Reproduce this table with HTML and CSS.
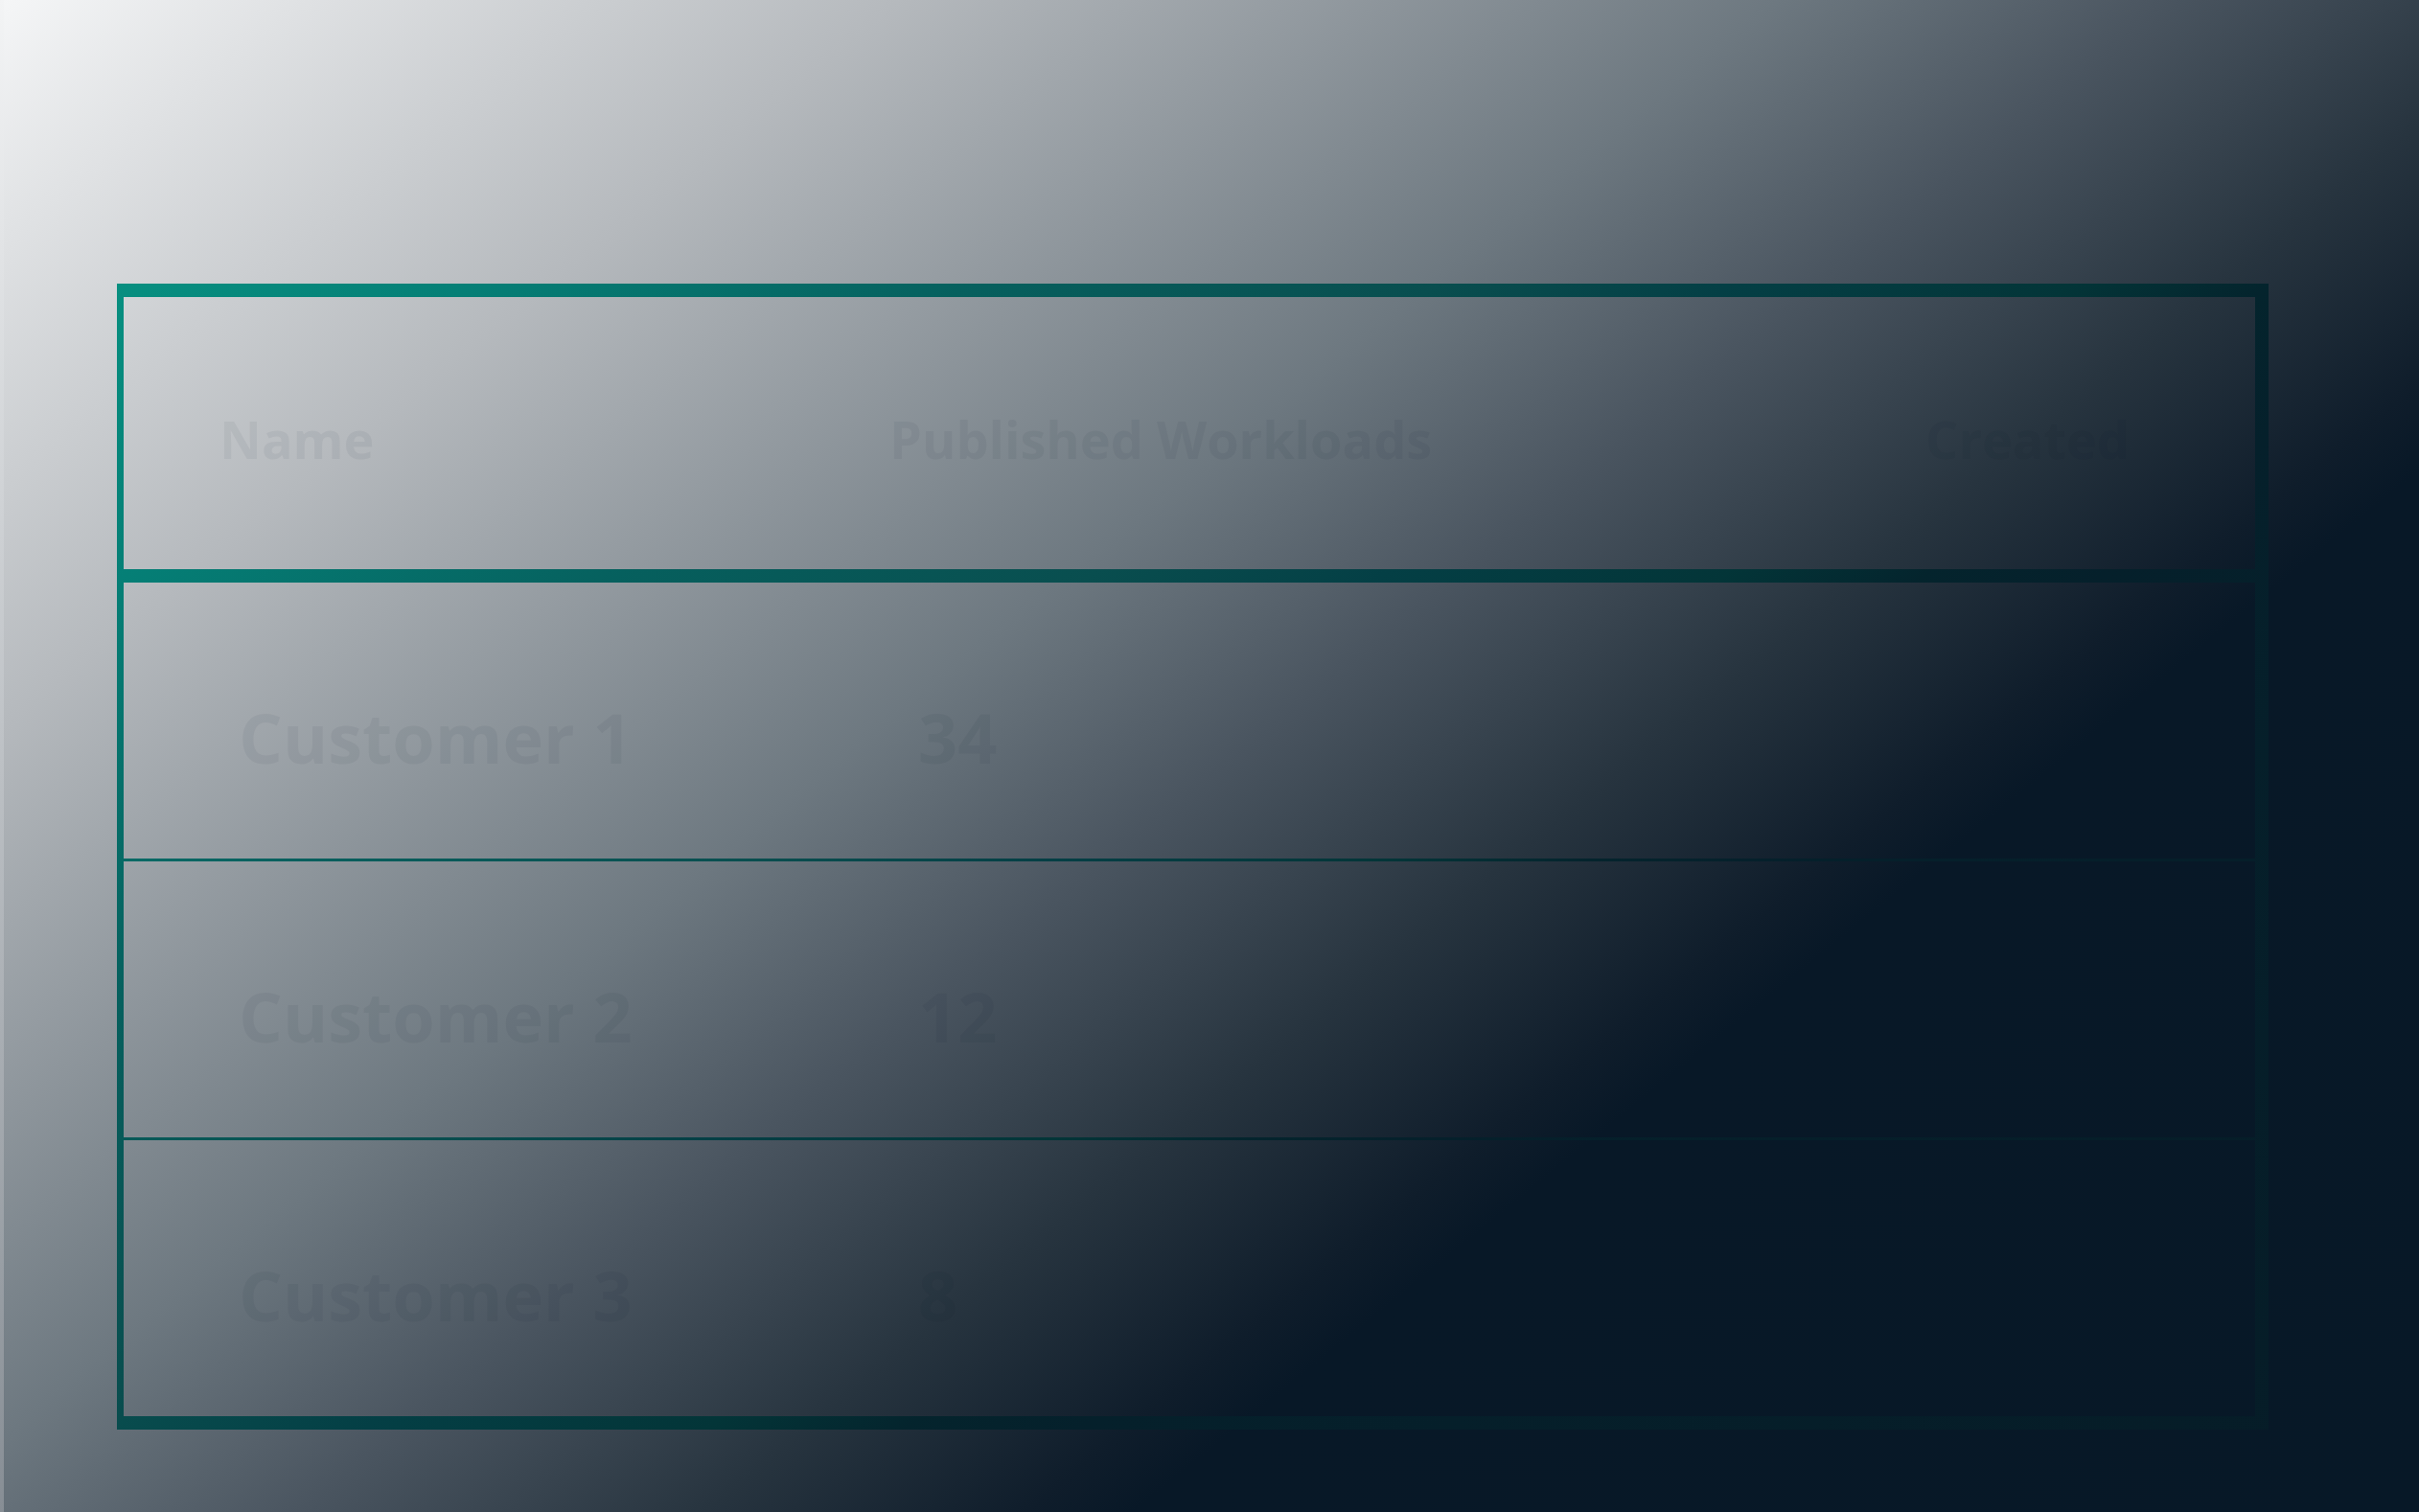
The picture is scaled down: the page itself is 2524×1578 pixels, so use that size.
FILE: index.html
```html
<!DOCTYPE html>
<html lang="en">
<head>
    <meta charset="UTF-8">
    <meta name="viewport" content="width=device-width, initial-scale=1.0">
    <title>Customers</title>
    <link rel="stylesheet" href="styles.css">
</head>
<body>
    <div class="page">
        <table class="customers">
            <colgroup>
                <col class="col-name">
                <col class="col-workloads">
                <col class="col-created">
            </colgroup>
            <thead>
                <tr>
                    <th>Name</th>
                    <th>Published Workloads</th>
                    <th>Created</th>
                </tr>
            </thead>
            <tbody>
                <tr>
                    <td class="name">Customer 1</td>
                    <td class="count">34</td>
                    <td class="date"></td>
                </tr>
                <tr>
                    <td class="name">Customer 2</td>
                    <td class="count">12</td>
                    <td class="date"></td>
                </tr>
                <tr>
                    <td class="name">Customer 3</td>
                    <td class="count">8</td>
                    <td class="date"></td>
                </tr>
            </tbody>
        </table>
    </div>
</body>
</html>
```

FILE: styles.css
```css
* {
    margin: 0;
    padding: 0;
    box-sizing: border-box;
}

html {
    background: linear-gradient(180deg, #f3f4f5, #878e95);
    min-height: 100%;
}

body {
    margin: 0;
    font-family: "Open Sans", "Noto Sans", sans-serif;
}

.page {
    margin-left: 4px;
    min-height: 100vh;
    padding: 296px 157px 0 118px;
    background: linear-gradient(141deg, #f5f6f7 0%, #b5b9bd 21%, #6d7880 41.5%, #4a5560 50.5%, #27343f 60%, #0f1d2b 67.5%, #081827 70%, #071827 100%) fixed;
}

.customers {
    width: 100%;
    table-layout: fixed;
    border-collapse: separate;
    border-spacing: 0;
    border: 14px solid transparent;
    border-left-width: 7px;
    background:
        linear-gradient(141deg, #f5f6f7 0%, #b5b9bd 21%, #6d7880 41.5%, #4a5560 50.5%, #27343f 60%, #0f1d2b 67.5%, #081827 70%, #071827 100%) fixed padding-box,
        linear-gradient(140deg, #0aa090 0%, #078f80 10.8%, #057f76 19.2%, #06605e 30.9%, #094e4f 42.1%, #043f45 49%, #033538 57.1%, #04242d 61.8%, #05202b 66%, #061c27 100%) fixed border-box;
}

.col-name {
    width: 699px;
}

.col-workloads {
    width: 1081px;
}

th,
td {
    text-align: left;
    font-weight: 700;
    color: rgba(8, 24, 39, 0.05);
    white-space: nowrap;
    background:
        linear-gradient(141deg, #f5f6f7 0%, #b5b9bd 21%, #6d7880 41.5%, #4a5560 50.5%, #27343f 60%, #0f1d2b 67.5%, #081827 70%, #071827 100%) fixed padding-box,
        linear-gradient(140deg, #0aa090 0%, #078f80 10.8%, #057f76 19.2%, #06605e 30.9%, #094e4f 42.1%, #043f45 49%, #033538 57.1%, #04242d 61.8%, #05202b 66%, #061c27 100%) fixed border-box;
}

th {
    font-size: 54px;
    line-height: 74px;
    padding: 111px 0 99px 100px;
    border-bottom: 14px solid transparent;
}

td {
    font-size: 72px;
    line-height: 98px;
    padding: 112px 0 78px 130px;
    border-bottom: 3px solid transparent;
}

td.name {
    padding-left: 120px;
}

tbody tr:last-child td {
    border-bottom: none;
}
```
